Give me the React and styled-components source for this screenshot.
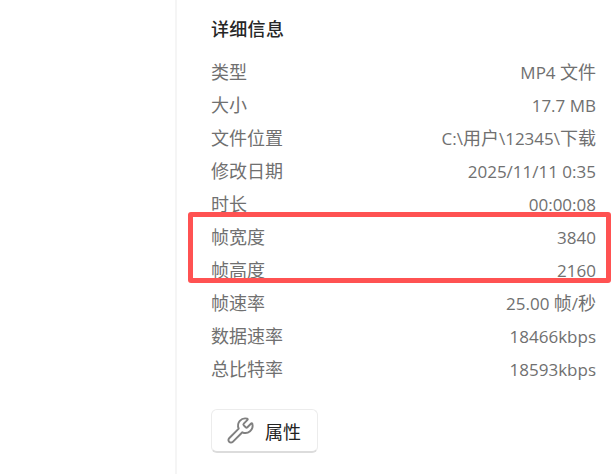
import React from 'react';
import styled, { createGlobalStyle } from 'styled-components';
import { Wrench } from 'lucide-react';

const GlobalStyle = createGlobalStyle`
  html, body {
    margin: 0;
    height: 100%;
    background: #fff;
    overflow: hidden;
  }
`;

const Page = styled.div`
  position: relative;
  display: flex;
  width: 615px;
  height: 474px;
  overflow: hidden;
  background: #fff;
  font-family: "Open Sans", "Noto Sans CJK SC", sans-serif;
`;

const Spacer = styled.div`
  width: 175px;
  flex-shrink: 0;
`;

const Panel = styled.div`
  flex: 1;
  border-left: 2px solid #f5f5f5;
  padding: 15px 19px 0 34px;
`;

const Title = styled.h2`
  margin: 0 0 13px;
  font-size: 18px;
  line-height: 28px;
  font-weight: 500;
  letter-spacing: 0.3px;
  color: #262626;
`;

const Rows = styled.div`
  display: flex;
  flex-direction: column;
`;

const Row = styled.div`
  display: flex;
  justify-content: space-between;
  align-items: baseline;
  height: 33px;
  line-height: 33px;
  font-size: 18px;
  color: #707070;
`;

const Value = styled.span`
  font-size: 17px;
`;

const Cjk = styled.span`
  font-size: 18px;
`;

const Button = styled.button`
  display: flex;
  align-items: center;
  gap: 10px;
  width: 107px;
  height: 44px;
  margin-top: 23px;
  padding: 0 0 0 14px;
  border: 1px solid #ececec;
  border-bottom: 2px solid #dcdcdc;
  border-radius: 6px;
  background: #fff;
  font: inherit;
  font-size: 18px;
  color: #222;
`;

const Highlight = styled.div`
  position: absolute;
  left: 188px;
  top: 212px;
  width: 423px;
  height: 71px;
  box-sizing: border-box;
  border: 5px solid #ff5252;
  border-radius: 3px;
`;

const rows = [
  ['类型', 'MP4 文件'],
  ['大小', '17.7 MB'],
  ['文件位置', 'C:\\用户\\12345\\下载'],
  ['修改日期', '2025/11/11 0:35'],
  ['时长', '00:00:08'],
  ['帧宽度', '3840'],
  ['帧高度', '2160'],
  ['帧速率', '25.00 帧/秒'],
  ['数据速率', '18466kbps'],
  ['总比特率', '18593kbps'],
];

// chinese runs stay at 18px, latin runs are a bit smaller
const renderValue = text =>
  text.split(/([\u4e00-\u9fff]+)/).map((part, i) =>
    i % 2 ? <Cjk key={i}>{part}</Cjk> : part
  );

export default function App() {
  return (
    <Page>
      <GlobalStyle />
      <Spacer />
      <Panel>
        <Title>详细信息</Title>
        <Rows>
          {rows.map(([label, value]) => (
            <Row key={label}>
              <span>{label}</span>
              <Value>{renderValue(value)}</Value>
            </Row>
          ))}
        </Rows>
        <Button>
          <Wrench size={29} strokeWidth={1.6} color="#808080" />
          属性
        </Button>
      </Panel>
      <Highlight />
    </Page>
  );
}
